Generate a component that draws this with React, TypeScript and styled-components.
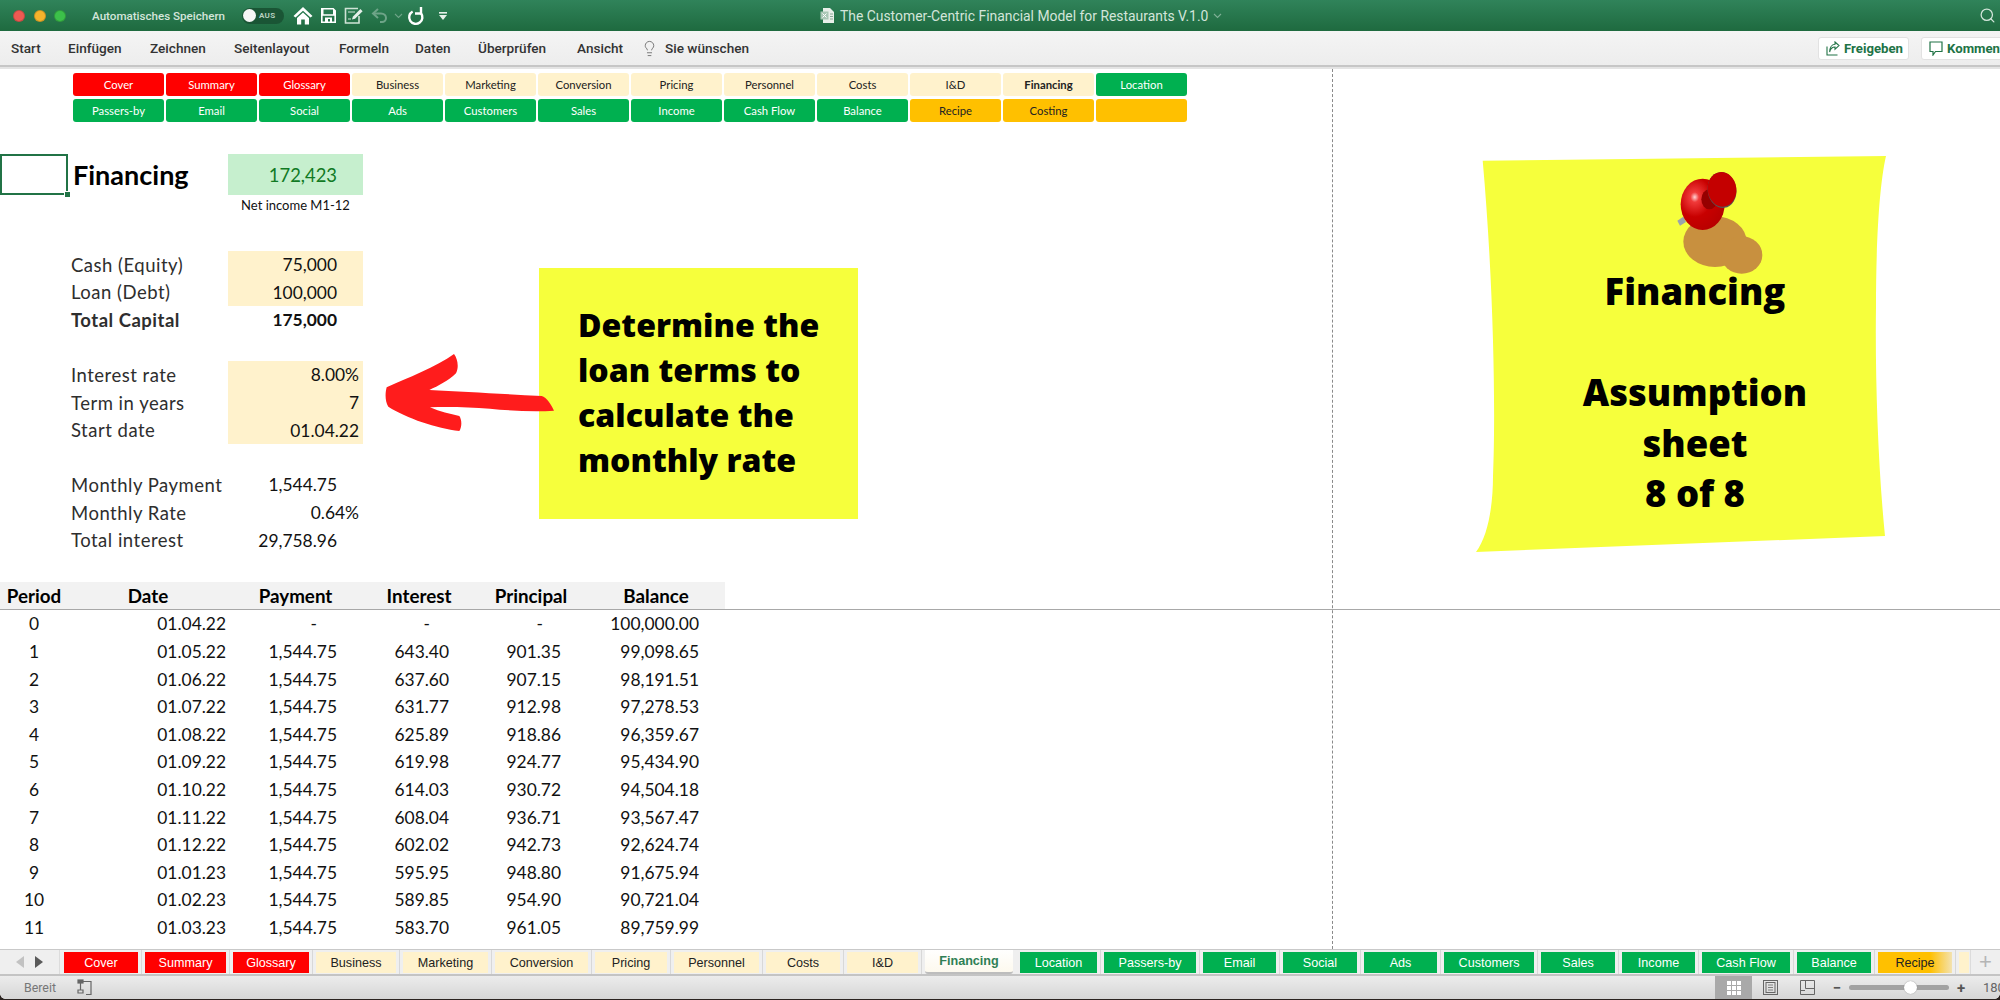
import styled, { createGlobalStyle } from "styled-components";
import { Lightbulb, Search } from "lucide-react";

const GlobalStyle = createGlobalStyle`
  html, body {
    margin: 0;
    padding: 0;
    background: #2b2320;
    overflow: hidden;
  }
  * { box-sizing: border-box; }
`;

const Page = styled.div`
  width: 2000px;
  height: 999px;
  display: flex;
  flex-direction: column;
  overflow: hidden;
  background: #fff;
  border-radius: 0 0 6px 6px;
  font-family: Roboto, "Liberation Sans", sans-serif;
`;

/* title bar */
const TitleBar = styled.div`
  height: 31px;
  flex: none;
  position: relative;
  display: flex;
  align-items: center;
  background: linear-gradient(#30835a, #1e6a3f);
  color: #d3e5da;
`;

const Lights = styled.div`
  display: flex;
  gap: 8.5px;
  margin-left: 13px;
`;

const Light = styled.span<{ $c: string }>`
  width: 12px;
  height: 12px;
  border-radius: 50%;
  background: ${(p) => p.$c};
  border: 1px solid rgba(0, 0, 0, 0.18);
`;

const AutoSave = styled.span`
  margin-left: 26px;
  width: 150px;
  font-size: 11.6px;
  font-weight: 500;
  white-space: nowrap;
`;

const Toggle = styled.div`
  width: 42px;
  height: 16px;
  border-radius: 8px;
  background: #1a5535;
  display: flex;
  align-items: center;
  gap: 3px;
  padding-left: 1px;
  font-size: 8px;
  font-weight: 700;
  letter-spacing: 0.3px;
  color: #b4cfbf;
`;

const Knob = styled.span`
  width: 13px;
  height: 13px;
  border-radius: 50%;
  background: #f6f6f6;
`;

const QuickIcons = styled.div`
  margin-left: 8px;
  display: flex;
  align-items: center;
`;

const QuickSlot = styled.div<{ $w: number }>`
  width: ${(p) => p.$w}px;
  display: flex;
  justify-content: center;
`;

const DocTitle = styled.div`
  position: absolute;
  left: 820px;
  top: 0;
  height: 31px;
  display: flex;
  align-items: center;
  gap: 5px;
  font-size: 13.9px;
  white-space: nowrap;
`;

const SearchSlot = styled.div`
  position: absolute;
  left: 1979px;
  top: 7px;
  display: flex;
`;

/* ribbon tabs */
const MenuBar = styled.div`
  height: 34px;
  flex: none;
  display: flex;
  align-items: center;
  padding-left: 11px;
  background: linear-gradient(#f4f4f4, #ededed);
  color: #333;
  font-size: 13.6px;
  font-weight: 500;
`;

const MenuItem = styled.span<{ $w: number }>`
  width: ${(p) => p.$w}px;
  white-space: nowrap;
`;

const TipIcon = styled.span`
  display: flex;
  margin-right: 7px;
  margin-left: -4px;
  color: #666;
`;

const MenuRight = styled.div`
  margin-left: auto;
  margin-right: -41px;
  display: flex;
  gap: 12px;
`;

const ShareButton = styled.div<{ $w: number }>`
  width: ${(p) => p.$w}px;
  height: 23px;
  background: #fff;
  border: 1px solid #e2e2e2;
  border-radius: 3px;
  display: flex;
  align-items: center;
  gap: 4px;
  padding-left: 7px;
  color: #217346;
  font-size: 13.2px;
  font-weight: 700;
  white-space: nowrap;
`;

const RibbonEdge = styled.div`
  height: 4px;
  flex: none;
  background: #e4e4e4;
  border-top: 2px solid #c6c6c6;
`;

/* sheet */
const Sheet = styled.div`
  flex: 1;
  min-height: 0;
  position: relative;
  overflow: hidden;
  background: #fff;
  font-family: Lato, "Liberation Sans", sans-serif;
  color: #111;
`;

const NavGrid = styled.div`
  margin: 4px 0 0 73px;
  display: grid;
  grid-template-columns: repeat(12, 91px);
  grid-auto-rows: 23px;
  column-gap: 2px;
  row-gap: 3px;
`;

const palette: Record<string, { bg: string; fg: string }> = {
  red: { bg: "#ff0000", fg: "#fff" },
  beige: { bg: "#fff2cc", fg: "#222" },
  green: { bg: "#00b050", fg: "#fff" },
  amber: { bg: "#ffc000", fg: "#222" },
};

const NavButton = styled.div<{ $tone: string; $bold?: boolean }>`
  background: ${(p) => palette[p.$tone].bg};
  color: ${(p) => palette[p.$tone].fg};
  font-weight: ${(p) => (p.$bold ? 700 : 400)};
  border-radius: 3px;
  font-size: 11.3px;
  display: flex;
  align-items: center;
  justify-content: center;
`;

const COLUMNS = "68px 160px 135px 112px 112px 138px";

const Group = styled.div<{ $top: number }>`
  margin-top: ${(p) => p.$top}px;
`;

const Row = styled.div<{ $h?: number }>`
  display: grid;
  grid-template-columns: ${COLUMNS};
  height: ${(p) => p.$h ?? 27.7}px;
  align-items: stretch;
  font-size: 17.4px;
`;

const Label = styled.div<{ $bold?: boolean }>`
  grid-column: 2;
  padding-left: 3px;
  display: flex;
  align-items: center;
  white-space: nowrap;
  color: #2e2e2e;
  font-size: 18.5px;
  letter-spacing: 0.5px;
  font-weight: ${(p) => (p.$bold ? 700 : 400)};
`;

const Value = styled.div<{ $pad?: number; $bg?: string; $bold?: boolean }>`
  grid-column: 3;
  display: flex;
  align-items: center;
  justify-content: flex-end;
  padding-right: ${(p) => p.$pad ?? 26}px;
  background: ${(p) => p.$bg ?? "transparent"};
  font-weight: ${(p) => (p.$bold ? 700 : 400)};
  white-space: nowrap;
`;

const ActiveCell = styled.div`
  grid-column: 1;
  border: 2px solid #217346;
  position: relative;
`;

const CellHandle = styled.span`
  position: absolute;
  right: -5px;
  bottom: -5px;
  width: 7px;
  height: 7px;
  background: #217346;
  border: 1px solid #fff;
`;

const SheetTitle = styled.div`
  grid-column: 2;
  padding-left: 5px;
  display: flex;
  align-items: center;
  font-size: 27px;
  font-weight: 700;
  color: #000;
`;

const NetValue = styled(Value)`
  background: #c6efce;
  color: #117a24;
  font-size: 18.4px;
`;

const NetNote = styled.div`
  grid-column: 3;
  display: flex;
  align-items: center;
  justify-content: center;
  font-size: 13px;
  white-space: nowrap;
`;

const TableHead = styled.div`
  border-bottom: 1px solid #a8a8a8;
`;

const HeadRow = styled.div`
  display: grid;
  grid-template-columns: ${COLUMNS};
  width: 725px;
  height: 27px;
  background: #f2f2f2;
  font-size: 18.8px;
  font-weight: 700;
  color: #000;
`;

const HeadCell = styled.div`
  display: flex;
  align-items: center;
  justify-content: center;
`;

const DataRow = styled.div`
  display: grid;
  grid-template-columns: ${COLUMNS};
  height: 27.6px;
  font-size: 17.4px;
`;

const PeriodCell = styled.div`
  display: flex;
  align-items: center;
  justify-content: center;
`;

const NumCell = styled.div<{ $pad: number }>`
  display: flex;
  align-items: center;
  justify-content: flex-end;
  padding-right: ${(p) => p.$pad}px;
`;

const PageBreak = styled.div`
  position: absolute;
  left: 1332px;
  top: 0;
  bottom: 0;
  border-left: 1px dashed #8a8a8a;
`;

const Callout = styled.div`
  position: absolute;
  left: 539px;
  top: 199px;
  width: 319px;
  height: 251px;
  background: #f6ff3c;
  padding: 34px 0 0 39px;
  font-family: "Open Sans", sans-serif;
  font-size: 32.1px;
  font-weight: 800;
  line-height: 45px;
  color: #000;
  white-space: pre-line;
`;

const ArrowWrap = styled.svg`
  position: absolute;
  left: 370px;
  top: 181px;
  width: 500px;
  height: 290px;
`;

const StickyNote = styled.div`
  position: absolute;
  left: 1476px;
  top: 87px;
  width: 410px;
  height: 396px;
  background: #f6ff3c;
  clip-path: path("M6.7 4.7 L410 0 C403 30 400 90 400 150 C399 220 402 310 409 380 L0 396 C12 380 17 350 17 320 C20 250 17 120 6.7 4.7 Z");
  padding: 110px 0 0 28px;
  display: flex;
  flex-direction: column;
  align-items: center;
  font-family: "Open Sans", sans-serif;
  font-size: 36.4px;
  font-weight: 800;
  line-height: 50.6px;
  color: #000;
`;

const NoteGap = styled.div`
  height: 50.6px;
`;

const PinSvg = styled.svg`
  position: absolute;
  left: 164px;
  top: 4px;
  width: 160px;
  height: 130px;
`;

/* sheet tabs */
const TabBar = styled.div`
  height: 27px;
  flex: none;
  display: flex;
  background: #efefef;
  border-top: 1px solid #c9c9c9;
  border-bottom: 2px solid #c4c4c4;
  position: relative;
`;

const TabNav = styled.div`
  width: 60px;
  flex: none;
  display: flex;
  align-items: center;
  justify-content: space-around;
  padding: 0 10px;
  border-right: 1px solid #dcdcdc;
  margin-right: 4px;
`;

const TabTriangle = styled.span<{ $dir: "l" | "r"; $c: string }>`
  width: 0;
  height: 0;
  border-top: 6px solid transparent;
  border-bottom: 6px solid transparent;
  ${(p) =>
    p.$dir === "l"
      ? `border-right: 8px solid ${p.$c};`
      : `border-left: 8px solid ${p.$c};`}
`;

const TabStrip = styled.div`
  flex: 1;
  display: flex;
  gap: 7px;
  padding-top: 2px;
  overflow: hidden;
`;

const Tab = styled.div<{ $tone: string; $w: number; $fade?: boolean }>`
  width: ${(p) => p.$w}px;
  flex: none;
  height: 21px;
  position: relative;
  background: ${(p) =>
    p.$fade
      ? `linear-gradient(90deg, ${palette[p.$tone].bg} 70%, #f3e2b0)`
      : palette[p.$tone].bg};
  color: ${(p) => palette[p.$tone].fg};
  font-family: "Liberation Sans", sans-serif;
  font-size: 12.6px;
  display: flex;
  align-items: center;
  justify-content: center;
  white-space: nowrap;
  &::after {
    content: "";
    position: absolute;
    right: -4px;
    top: -2px;
    height: 25px;
    border-right: 1px solid #d8d8d8;
  }
`;

const ActiveTab = styled.div<{ $w: number }>`
  width: ${(p) => p.$w}px;
  flex: none;
  height: 25px;
  margin-top: -3px;
  padding-top: 1px;
  background: linear-gradient(#ffffff, #fdf9ee);
  border-bottom: 2px solid #bdbdbd;
  border-radius: 0 0 3px 3px;
  color: #2f7f55;
  font-family: "Liberation Sans", sans-serif;
  font-size: 12.6px;
  font-weight: 700;
  display: flex;
  align-items: center;
  justify-content: center;
`;

const AddSheet = styled.div`
  width: 30px;
  flex: none;
  border-left: 1px solid #dcdcdc;
  display: flex;
  align-items: center;
  justify-content: center;
  color: #b5b5b5;
  font-size: 22px;
  font-family: "Liberation Sans", sans-serif;
`;

/* status bar */
const StatusBar = styled.div`
  height: 23px;
  flex: none;
  display: flex;
  align-items: stretch;
  background: linear-gradient(#ececec, #d6d6d6);
  color: #777;
  font-size: 12.4px;
`;

const StatusText = styled.span`
  margin-left: 24px;
  align-self: center;
`;

const StatusIcon = styled.span`
  margin-left: 21px;
  align-self: center;
  display: flex;
`;

const ViewButtons = styled.div`
  margin-left: auto;
  display: flex;
`;

const ViewButton = styled.div<{ $on?: boolean }>`
  width: 37px;
  display: flex;
  align-items: center;
  justify-content: center;
  background: ${(p) => (p.$on ? "#a9a9a9" : "transparent")};
`;

const ZoomBox = styled.div`
  width: 174px;
  flex: none;
  display: flex;
  align-items: center;
  padding-left: 5px;
  color: #666;
  white-space: nowrap;
  overflow: hidden;
`;

const ZoomSign = styled.span`
  width: 12px;
  flex: none;
  font-size: 15px;
  font-weight: 700;
  text-align: center;
  color: #555;
`;

const ZoomTrack = styled.div`
  width: 100px;
  flex: none;
  height: 5px;
  margin: 0 6px 0 6px;
  border-radius: 3px;
  background: #a2a2a2;
  position: relative;
`;

const ZoomThumb = styled.span`
  position: absolute;
  left: 55px;
  top: -4px;
  width: 13px;
  height: 13px;
  border-radius: 50%;
  background: #fff;
  box-shadow: 0 0 1px #777;
`;

const ZoomValue = styled.span`
  margin-left: 16px;
  font-size: 13px;
`;

const nav1: [string, string][] = [
  ["Cover", "red"], ["Summary", "red"], ["Glossary", "red"], ["Business", "beige"],
  ["Marketing", "beige"], ["Conversion", "beige"], ["Pricing", "beige"], ["Personnel", "beige"],
  ["Costs", "beige"], ["I&D", "beige"], ["Financing", "beige"], ["Location", "green"],
];

const nav2: [string, string][] = [
  ["Passers-by", "green"], ["Email", "green"], ["Social", "green"], ["Ads", "green"],
  ["Customers", "green"], ["Sales", "green"], ["Income", "green"], ["Cash Flow", "green"],
  ["Balance", "green"], ["Recipe", "amber"], ["Costing", "amber"], ["", "amber"],
];

const schedule = [
  ["0", "01.04.22", "-", "-", "-", "100,000.00"],
  ["1", "01.05.22", "1,544.75", "643.40", "901.35", "99,098.65"],
  ["2", "01.06.22", "1,544.75", "637.60", "907.15", "98,191.51"],
  ["3", "01.07.22", "1,544.75", "631.77", "912.98", "97,278.53"],
  ["4", "01.08.22", "1,544.75", "625.89", "918.86", "96,359.67"],
  ["5", "01.09.22", "1,544.75", "619.98", "924.77", "95,434.90"],
  ["6", "01.10.22", "1,544.75", "614.03", "930.72", "94,504.18"],
  ["7", "01.11.22", "1,544.75", "608.04", "936.71", "93,567.47"],
  ["8", "01.12.22", "1,544.75", "602.02", "942.73", "92,624.74"],
  ["9", "01.01.23", "1,544.75", "595.95", "948.80", "91,675.94"],
  ["10", "01.02.23", "1,544.75", "589.85", "954.90", "90,721.04"],
  ["11", "01.03.23", "1,544.75", "583.70", "961.05", "89,759.99"],
  ["12", "01.04.23", "1,544.75", "577.52", "967.23", "88,792.76"],
];

const tabs: { label: string; tone: string; w: number; fade?: boolean }[] = [
  { label: "Cover", tone: "red", w: 74 },
  { label: "Summary", tone: "red", w: 81 },
  { label: "Glossary", tone: "red", w: 76 },
  { label: "Business", tone: "beige", w: 80 },
  { label: "Marketing", tone: "beige", w: 85 },
  { label: "Conversion", tone: "beige", w: 93 },
  { label: "Pricing", tone: "beige", w: 72 },
  { label: "Personnel", tone: "beige", w: 85 },
  { label: "Costs", tone: "beige", w: 74 },
  { label: "I&D", tone: "beige", w: 71 },
];

const tabsAfter: { label: string; tone: string; w: number; fade?: boolean }[] = [
  { label: "Location", tone: "green", w: 77 },
  { label: "Passers-by", tone: "green", w: 92 },
  { label: "Email", tone: "green", w: 73 },
  { label: "Social", tone: "green", w: 74 },
  { label: "Ads", tone: "green", w: 73 },
  { label: "Customers", tone: "green", w: 90 },
  { label: "Sales", tone: "green", w: 74 },
  { label: "Income", tone: "green", w: 73 },
  { label: "Cash Flow", tone: "green", w: 88 },
  { label: "Balance", tone: "green", w: 74 },
  { label: "Recipe", tone: "amber", w: 74, fade: true },
  { label: "", tone: "beige", w: 10 },
];

function HomeIcon() {
  return (
    <svg width="20" height="20" viewBox="0 0 20 20" fill="#fff">
      <path d="M10 1 L19.5 10 L17.5 11.6 L10 4.8 L2.5 11.6 L0.5 10 Z" />
      <path d="M4 12 L10 6.6 L16 12 V18.5 H11.8 V13.6 H8.2 V18.5 H4 Z" />
    </svg>
  );
}

function SaveIcon() {
  return (
    <svg width="17" height="17" viewBox="0 0 17 17" fill="#fff">
      <path
        fillRule="evenodd"
        d="M1 1 H13.5 L16 3.5 V16 H1 Z M3.5 2.6 V7.2 H13 V2.6 Z M2.6 8.8 V14.4 H5 V10.5 H12 V14.4 H14.4 V8.8 Z M8 12 V14.6 H10 V12 Z"
      />
    </svg>
  );
}

function EditIcon() {
  return (
    <svg width="20" height="18" viewBox="0 0 20 18" fill="none" stroke="#cfe3d6" strokeWidth="1.6">
      <path d="M14 1.5 H1.5 V16 H15 V9" />
      <path d="M4 5 H11 M4 12 H7" strokeWidth="1.2" />
      <path d="M8 12.5 L8.8 9.8 L16.4 2 L18.6 4.2 L11 11.8 Z" fill="#e6f0ea" stroke="none" />
    </svg>
  );
}

function UndoIcon() {
  return (
    <svg width="17" height="17" viewBox="0 0 17 17" fill="none" stroke="#6ea488" strokeWidth="2">
      <path d="M7 2 L2 6.5 L7 11" />
      <path d="M2.5 6.5 H10 C13 6.5 15 8.5 15 11 C15 13.5 13 15 11 15 H9" />
    </svg>
  );
}

function RedoIcon() {
  return (
    <svg width="20" height="20" viewBox="0 0 20 20" fill="none" stroke="#fff" strokeWidth="2.4">
      <path d="M14 1 L14 7.5 L8 7.5" />
      <path d="M13.8 7 A6.6 6.6 0 1 1 5.6 5.5" />
    </svg>
  );
}

function QuickMenuIcon() {
  return (
    <svg width="10" height="10" viewBox="0 0 10 10" fill="#e6f0ea">
      <rect x="1" y="1" width="8" height="1.6" />
      <path d="M1 4 H9 L5 9 Z" />
    </svg>
  );
}

function Chevron({ c }: { c: string }) {
  return (
    <svg width="9" height="6" viewBox="0 0 9 6" fill="none" stroke={c} strokeWidth="1.1">
      <path d="M1 1 L4.5 4.5 L8 1" />
    </svg>
  );
}

function ExcelDoc() {
  return (
    <svg width="15" height="17" viewBox="0 0 15 17">
      <path d="M3 1 H10 L14 5 V16 H3 Z" fill="#e8efe9" />
      <rect x="0.5" y="4.5" width="8" height="8" fill="#a9c7b5" />
      <path d="M2.5 6.5 L6.5 10.5 M6.5 6.5 L2.5 10.5" stroke="#fff" strokeWidth="1" />
      <path d="M10 7 H13 M10 9.5 H13 M10 12 H13" stroke="#8aa896" strokeWidth="1" />
    </svg>
  );
}

function ShareIcon() {
  return (
    <svg width="14" height="15" viewBox="0 0 14 15" fill="none" stroke="#217346" strokeWidth="1.1">
      <path d="M1 5.5 V14 H11.5" />
      <path d="M9 1 L13 4.6 L9 8.2 V6 C6.5 6 4.5 7.5 3.6 11 C3.6 7 5.5 3.4 9 3.2 Z" />
    </svg>
  );
}

function CommentIcon() {
  return (
    <svg width="14" height="15" viewBox="0 0 14 15" fill="none" stroke="#217346" strokeWidth="1.2">
      <path d="M1 1 H13 V10.5 H6.5 L4 14 V10.5 H1 Z" />
    </svg>
  );
}

function MacroIcon() {
  return (
    <svg width="17" height="17" viewBox="0 0 17 17" fill="none" stroke="#666" strokeWidth="1.2">
      <rect x="1" y="1" width="5" height="3" fill="#666" />
      <path d="M3.5 4 V11 M1 11 H6 V14 H1 Z M6 2.5 H14 V15.5 H9" />
    </svg>
  );
}

function GridIcon() {
  return (
    <svg width="14" height="14" viewBox="0 0 14 14" fill="#fff">
      {[0, 5, 10].map((y) =>
        [0, 5, 10].map((x) => <rect key={`${x}-${y}`} x={x} y={y} width="4" height="4" />)
      )}
    </svg>
  );
}

function PageIcon() {
  return (
    <svg width="15" height="15" viewBox="0 0 15 15" fill="none" stroke="#666">
      <rect x="0.5" y="0.5" width="14" height="14" />
      <rect x="3" y="2.5" width="9" height="10" />
      <path d="M5 5 H10 M5 7.5 H10 M5 10 H10" strokeWidth="0.8" />
    </svg>
  );
}

function BreakIcon() {
  return (
    <svg width="15" height="15" viewBox="0 0 15 15" fill="none" stroke="#666">
      <path d="M0.5 0.5 H14.5 V14.5 H0.5 Z" />
      <path d="M5.5 0.5 V8.5 H14.5 M0.5 10.5 H5" />
    </svg>
  );
}

function PushPin() {
  return (
    <PinSvg viewBox="0 0 480 390">
      <defs>
        <radialGradient id="pinHead" cx="32%" cy="36%" r="70%">
          <stop offset="0%" stopColor="#ffd4d4" />
          <stop offset="14%" stopColor="#f03a3a" />
          <stop offset="55%" stopColor="#c80000" />
          <stop offset="100%" stopColor="#b80000" />
        </radialGradient>
      </defs>
      <ellipse cx="225" cy="245" rx="95" ry="76" fill="#c8903f" />
      <ellipse cx="305" cy="285" rx="62" ry="56" fill="#c8903f" />
      <path d="M112 182 L130 170 L138 186 L120 197 Z" fill="#9aa3ad" />
      <ellipse cx="188" cy="133" rx="66" ry="77" fill="url(#pinHead)" />
      <ellipse cx="208" cy="118" rx="24" ry="30" fill="#960000" />
      <ellipse cx="246" cy="90" rx="43" ry="54" fill="#555" transform="rotate(-8 246 90)" />
      <ellipse cx="246" cy="88" rx="43" ry="52" fill="#c40000" transform="rotate(-8 246 88)" />
    </PinSvg>
  );
}

export default function App() {
  return (
    <Page>
      <GlobalStyle />
      <TitleBar>
        <Lights>
          <Light $c="#ee5a52" />
          <Light $c="#f5b32c" />
          <Light $c="#3cc04a" />
        </Lights>
        <AutoSave>Automatisches Speichern</AutoSave>
        <Toggle>
          <Knob />
          AUS
        </Toggle>
        <QuickIcons>
          <QuickSlot $w={22}><HomeIcon /></QuickSlot>
          <QuickSlot $w={28}><SaveIcon /></QuickSlot>
          <QuickSlot $w={24}><EditIcon /></QuickSlot>
          <QuickSlot $w={26}><UndoIcon /></QuickSlot>
          <QuickSlot $w={12}><Chevron c="#6ea488" /></QuickSlot>
          <QuickSlot $w={26}><RedoIcon /></QuickSlot>
          <QuickSlot $w={26}><QuickMenuIcon /></QuickSlot>
        </QuickIcons>
        <DocTitle>
          <ExcelDoc />
          The Customer-Centric Financial Model for Restaurants V.1.0
          <Chevron c="#7fb096" />
        </DocTitle>
        <SearchSlot>
          <Search size={17} strokeWidth={1.8} />
        </SearchSlot>
      </TitleBar>

      <MenuBar>
        <MenuItem $w={57}>Start</MenuItem>
        <MenuItem $w={82}>Einfügen</MenuItem>
        <MenuItem $w={84}>Zeichnen</MenuItem>
        <MenuItem $w={105}>Seitenlayout</MenuItem>
        <MenuItem $w={76}>Formeln</MenuItem>
        <MenuItem $w={63}>Daten</MenuItem>
        <MenuItem $w={99}>Überprüfen</MenuItem>
        <MenuItem $w={68}>Ansicht</MenuItem>
        <TipIcon>
          <Lightbulb size={17} strokeWidth={1.2} />
        </TipIcon>
        <MenuItem $w={90}>Sie wünschen</MenuItem>
        <MenuRight>
          <ShareButton $w={91}>
            <ShareIcon />
            Freigeben
          </ShareButton>
          <ShareButton $w={120}>
            <CommentIcon />
            Kommentare
          </ShareButton>
        </MenuRight>
      </MenuBar>
      <RibbonEdge />

      <Sheet>
        <NavGrid>
          {nav1.map(([label, tone]) => (
            <NavButton key={label} $tone={tone} $bold={label === "Financing"}>
              {label}
            </NavButton>
          ))}
          {nav2.map(([label, tone], i) => (
            <NavButton key={i} $tone={tone}>
              {label}
            </NavButton>
          ))}
        </NavGrid>

        <Group $top={32}>
          <Row $h={41}>
            <ActiveCell>
              <CellHandle />
            </ActiveCell>
            <SheetTitle>Financing</SheetTitle>
            <NetValue>172,423</NetValue>
          </Row>
          <Row $h={20}>
            <NetNote>Net income M1-12</NetNote>
          </Row>
        </Group>

        <Group $top={36}>
          <Row $h={27.6}>
            <Label>Cash (Equity)</Label>
            <Value $bg="#fff2cc">75,000</Value>
          </Row>
          <Row $h={27.6}>
            <Label>Loan (Debt)</Label>
            <Value $bg="#fff2cc">100,000</Value>
          </Row>
          <Row $h={27.6}>
            <Label $bold>Total Capital</Label>
            <Value $bold>175,000</Value>
          </Row>
        </Group>

        <Group $top={27.2}>
          <Row>
            <Label>Interest rate</Label>
            <Value $bg="#fff2cc" $pad={4}>8.00%</Value>
          </Row>
          <Row>
            <Label>Term in years</Label>
            <Value $bg="#fff2cc" $pad={4}>7</Value>
          </Row>
          <Row>
            <Label>Start date</Label>
            <Value $bg="#fff2cc" $pad={4}>01.04.22</Value>
          </Row>
        </Group>

        <Group $top={27}>
          <Row>
            <Label>Monthly Payment</Label>
            <Value>1,544.75</Value>
          </Row>
          <Row>
            <Label>Monthly Rate</Label>
            <Value $pad={4}>0.64%</Value>
          </Row>
          <Row>
            <Label>Total interest</Label>
            <Value>29,758.96</Value>
          </Row>
        </Group>

        <Group $top={28}>
          <TableHead>
            <HeadRow>
              <HeadCell>Period</HeadCell>
              <HeadCell>Date</HeadCell>
              <HeadCell>Payment</HeadCell>
              <HeadCell>Interest</HeadCell>
              <HeadCell>Principal</HeadCell>
              <HeadCell>Balance</HeadCell>
            </HeadRow>
          </TableHead>
          {schedule.map((r) => (
            <DataRow key={r[0]}>
              <PeriodCell>{r[0]}</PeriodCell>
              <NumCell $pad={2}>{r[1]}</NumCell>
              <NumCell $pad={r[2] === "-" ? 46 : 26}>{r[2]}</NumCell>
              <NumCell $pad={r[3] === "-" ? 45 : 26}>{r[3]}</NumCell>
              <NumCell $pad={r[4] === "-" ? 44 : 26}>{r[4]}</NumCell>
              <NumCell $pad={26}>{r[5]}</NumCell>
            </DataRow>
          ))}
        </Group>

        <PageBreak />

        <Callout>{"Determine the\nloan terms to\ncalculate the\nmonthly rate"}</Callout>

        <ArrowWrap viewBox="0 0 1500 870">
          <path
            fill="#ff1c1c"
            d="M50 412 C110 385 200 350 252 312 C262 325 268 350 258 370 C235 392 205 408 178 420 C280 425 400 432 515 438 C530 442 545 465 552 482 C490 486 420 482 360 476 C300 472 240 470 180 472 C210 485 240 492 268 498 C276 510 276 530 268 543 C200 535 110 505 55 470 C45 455 45 430 50 412 Z"
          />
        </ArrowWrap>

        <StickyNote>
          <PushPin />
          <span>Financing</span>
          <NoteGap />
          <span>Assumption</span>
          <span>sheet</span>
          <span>8 of 8</span>
        </StickyNote>
      </Sheet>

      <TabBar>
        <TabNav>
          <TabTriangle $dir="l" $c="#c2c2c2" />
          <TabTriangle $dir="r" $c="#5a5a5a" />
        </TabNav>
        <TabStrip>
          {tabs.map((t) => (
            <Tab key={t.label} $tone={t.tone} $w={t.w}>
              {t.label}
            </Tab>
          ))}
          <ActiveTab $w={88}>Financing</ActiveTab>
          {tabsAfter.map((t) => (
            <Tab key={t.label} $tone={t.tone} $w={t.w} $fade={t.fade}>
              {t.label}
            </Tab>
          ))}
        </TabStrip>
        <AddSheet>+</AddSheet>
      </TabBar>

      <StatusBar>
        <StatusText>Bereit</StatusText>
        <StatusIcon>
          <MacroIcon />
        </StatusIcon>
        <ViewButtons>
          <ViewButton $on>
            <GridIcon />
          </ViewButton>
          <ViewButton>
            <PageIcon />
          </ViewButton>
          <ViewButton>
            <BreakIcon />
          </ViewButton>
        </ViewButtons>
        <ZoomBox>
          <ZoomSign>−</ZoomSign>
          <ZoomTrack>
            <ZoomThumb />
          </ZoomTrack>
          <ZoomSign>+</ZoomSign>
          <ZoomValue>180 %</ZoomValue>
        </ZoomBox>
      </StatusBar>
    </Page>
  );
}
